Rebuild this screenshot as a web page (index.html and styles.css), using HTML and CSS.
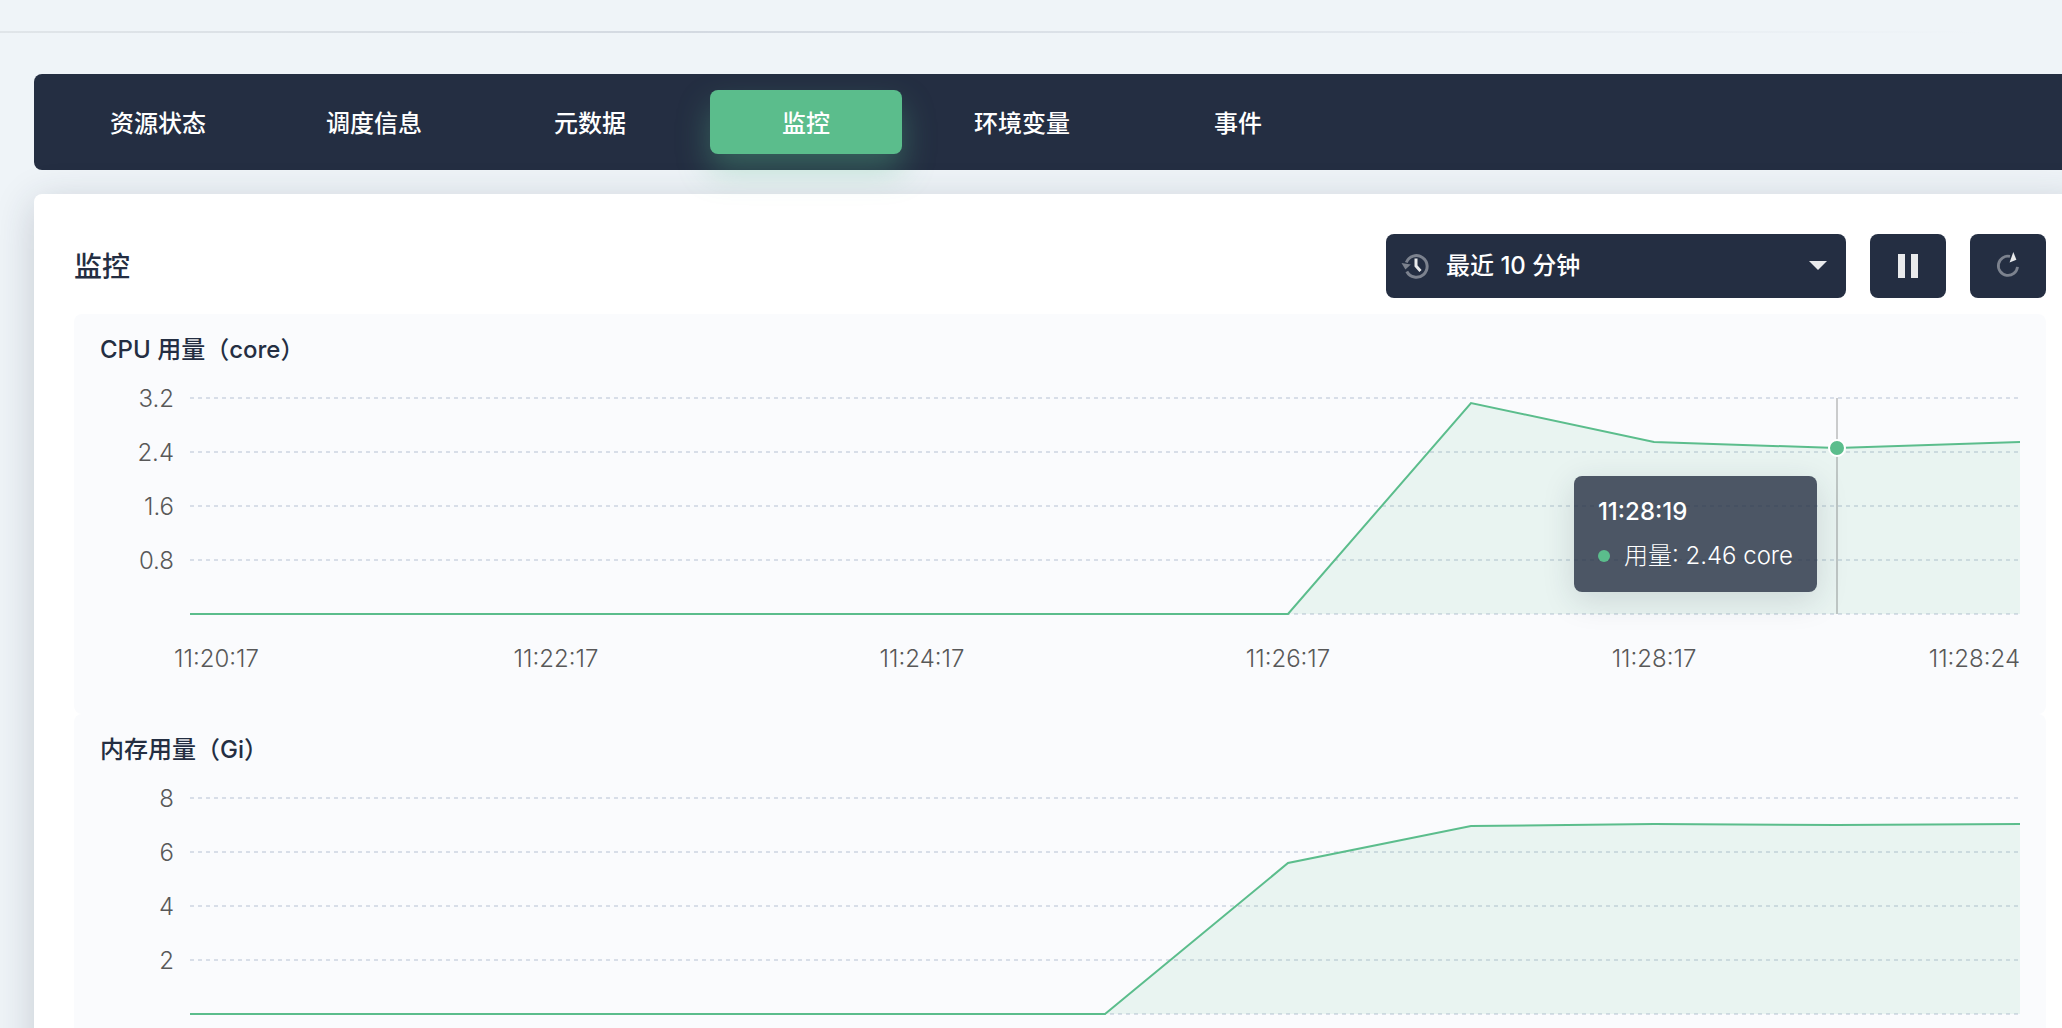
FILE: index.html
```html
<!DOCTYPE html>
<html lang="zh-CN">
<head>
<meta charset="utf-8">
<meta name="viewport" content="width=device-width, initial-scale=1">
<title>监控</title>
<link rel="stylesheet" href="styles.css">
</head>
<body>
<main class="page">
  <hr class="divider">
  <nav class="tabs">
    <button class="tab" type="button">资源状态</button>
    <button class="tab" type="button">调度信息</button>
    <button class="tab" type="button">元数据</button>
    <button class="tab tab-active" type="button" aria-current="page">监控</button>
    <button class="tab" type="button">环境变量</button>
    <button class="tab" type="button">事件</button>
  </nav>
  <section class="card">
    <header class="card-header">
      <h1 class="card-title">监控</h1>
      <label class="range" for="range">
        <svg class="range-icon" width="32" height="32" viewBox="0 0 32 32" aria-hidden="true">
          <path d="M6.3 12.5A10.8 10.8 0 1 1 6.8 21.500" fill="none" stroke="#7c828e" stroke-width="3"/>
          <path d="M1.500 13 10.800 14.600 5.400 19.400Z" fill="#7c828e"/>
          <path d="M16 8.500v7.500l4.500 5" fill="none" stroke="#e9eaec" stroke-width="3"/>
        </svg>
        <select class="range-select" id="range" aria-label="时间范围">
          <option>最近 10 分钟</option>
        </select>
        <svg class="range-caret" width="20" height="10" viewBox="0 0 20 10" aria-hidden="true"><path d="M1 0H19L10 9Z" fill="#e9eaec"/></svg>
      </label>
      <button class="icon-button" type="button" aria-label="暂停">
        <svg width="32" height="32" viewBox="0 0 32 32"><path d="M6 4h7v24H6zM19 4h7v24h-7z" fill="#e9eaec"/></svg>
      </button>
      <button class="icon-button" type="button" aria-label="刷新">
        <svg width="32" height="32" viewBox="0 0 32 32">
          <path d="M18 6.400A9.600 9.600 0 1 0 25.500 16.800" fill="none" stroke="#7c828e" stroke-width="2.800"/>
          <path d="M21.300 2 24.400 9.700 17.600 12.600Z" fill="#e9eaec"/>
        </svg>
      </button>
    </header>

    <section class="chart">
      <h2 class="chart-title">CPU 用量（core）</h2>
      <div class="chart-body">
        <div class="y-axis"><span>3.2</span><span>2.4</span><span>1.6</span><span>0.8</span></div>
        <div class="plot">
          <svg class="plot-svg" viewBox="0 0 1830 216" preserveAspectRatio="none" aria-hidden="true">
            <path class="grid-line" d="M0 0H1830M0 54H1830M0 108H1830M0 162H1830M0 216H1830"/>
            <path class="area" d="M0 216H1098L1281 5 1464 44 1647 50 1830 44V216Z"/>
            <path class="cursor-line" d="M1647 0V216"/>
            <path class="line" d="M0 216H1098L1281 5 1464 44 1647 50 1830 44"/>
          </svg>
          <span class="marker"></span>
          <div class="tooltip">
            <strong class="tooltip-title">11:28:19</strong>
            <span class="tooltip-row"><i class="dot"></i>用量: 2.46 core</span>
          </div>
        </div>
        <div class="x-axis"><span>11:20:17</span><span>11:22:17</span><span>11:24:17</span><span>11:26:17</span><span>11:28:17</span><span>11:28:24</span></div>
      </div>
    </section>

    <section class="chart">
      <h2 class="chart-title">内存用量（Gi）</h2>
      <div class="chart-body">
        <div class="y-axis"><span>8</span><span>6</span><span>4</span><span>2</span></div>
        <div class="plot">
          <svg class="plot-svg" viewBox="0 0 1830 216" preserveAspectRatio="none" aria-hidden="true">
            <path class="grid-line" d="M0 0H1830M0 54H1830M0 108H1830M0 162H1830M0 216H1830"/>
            <path class="area" d="M0 216H915L1098 65 1281 28 1464 26 1647 27 1830 26V216Z"/>
            <path class="line" d="M0 216H915L1098 65 1281 28 1464 26 1647 27 1830 26"/>
          </svg>
        </div>
      </div>
    </section>
  </section>
</main>
</body>
</html>
```
FILE: styles.css
```css
* { box-sizing: border-box; }

body {
  margin: 0;
  height: 100vh;
  overflow: hidden;
  background: #eff4f8;
  color: #242e42;
  font-family: Inter, "Noto Sans CJK SC", sans-serif;
  font-size: 24px;
  line-height: 32px;
}

button, select { font: inherit; color: inherit; border: 0; }

.page {
  margin-right: -24px;
  padding: 31px 0 40px 34px;
}

.divider {
  height: 2px;
  margin: 0 0 41px -34px;
  border: 0;
  background: linear-gradient(to right, #e0e5e9, #d3d9e1 33%, #eff4f8 95%);
}

.tabs {
  display: flex;
  gap: 24px;
  padding: 16px 28px;
  border-radius: 8px;
  background: #242e42;
  color: #fff;
}

.tab {
  width: 192px;
  height: 64px;
  padding: 4px 0 0;
  border-radius: 8px;
  background: none;
  font-weight: 500;
}

.tab-active {
  background: #5bbd8c;
  box-shadow: 0 16px 32px rgba(85, 188, 138, 0.36);
}

.card {
  margin-top: 24px;
  padding: 40px;
  border-radius: 8px;
  background: #fff;
  box-shadow: 0 8px 40px rgba(36, 46, 66, 0.2);
}

.card-header {
  display: flex;
  align-items: center;
  gap: 24px;
  margin-bottom: 16px;
}

.card-title {
  flex: 1;
  margin: 0;
  padding-top: 2px;
  font-size: 28px;
  font-weight: 500;
}

.range {
  display: flex;
  align-items: center;
  gap: 14px;
  width: 460px;
  height: 64px;
  padding: 0 18px 0 14px;
  border-radius: 8px;
  background: #242e42;
  color: #fff;
}

.range-select {
  flex: 1;
  padding: 0;
  background: none;
  font-weight: 500;
  appearance: none;
}

.icon-button {
  display: flex;
  align-items: center;
  justify-content: center;
  width: 76px;
  height: 64px;
  padding: 0;
  border-radius: 8px;
  background: #242e42;
}

.chart {
  height: 400px;
  padding: 20px 26px;
  border-radius: 8px;
  background: #fafbfd;
}

.chart-title {
  margin: 0 0 32px;
  font-size: 24px;
  font-weight: 500;
}

.chart-body {
  display: grid;
  grid-template-columns: 74px 1fr;
  column-gap: 16px;
  row-gap: 29px;
}

.y-axis, .x-axis { color: #585858; font-weight: 300; }

.y-axis {
  display: flex;
  flex-direction: column;
  gap: 22px;
  height: 216px;
  margin-top: -15px;
  text-align: right;
}

.plot { position: relative; height: 216px; }

.plot-svg {
  display: block;
  width: 100%;
  height: 100%;
  overflow: visible;
}

.plot-svg path {
  fill: none;
  stroke-width: 2;
  vector-effect: non-scaling-stroke;
}

.plot-svg .area { fill: rgba(85, 188, 138, 0.1); }
.grid-line { stroke: #d8dee8; stroke-dasharray: 4 4; }
.cursor-line { stroke: rgba(80, 80, 80, 0.28); }
.line { stroke: #5bbd8c; }

.marker {
  position: absolute;
  top: 50px;
  left: 90%;
  width: 18px;
  height: 18px;
  border: 2px solid #fff;
  border-radius: 50%;
  background: #5bbd8c;
  transform: translate(-50%, -50%);
}

.tooltip {
  position: absolute;
  top: 78px;
  right: 203px;
  display: flex;
  flex-direction: column;
  gap: 12px;
  padding: 20px 24px;
  border-radius: 8px;
  background: rgba(36, 46, 66, 0.8);
  box-shadow: 0 8px 32px rgba(36, 46, 66, 0.15);
  color: #fff;
}

.tooltip-title { font-weight: 500; }
.tooltip-row { display: flex; align-items: center; font-weight: 300; white-space: nowrap; }

.dot {
  width: 12px;
  height: 12px;
  margin-right: 14px;
  border-radius: 50%;
  background: #5bbd8c;
}

.x-axis {
  grid-column: 2;
  display: grid;
  grid-template-columns: 1fr 2fr 2fr 2fr 2fr 1fr;
  text-align: center;
}

.x-axis span:first-child { margin-left: -16px; text-align: left; }
.x-axis span:last-child { text-align: right; }
```
